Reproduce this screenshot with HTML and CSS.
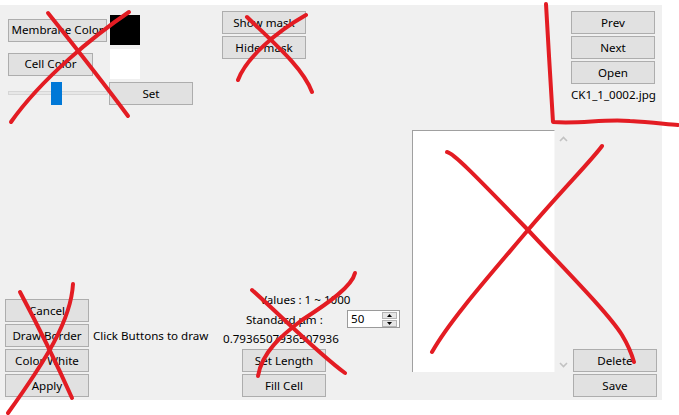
FILE: index.html
```html
<!DOCTYPE html>
<html>
<head>
<meta charset="utf-8">
<link rel="stylesheet" href="styles.css">
</head>
<body>
<div class="form">
  <div class="col col-left">
    <div class="color-group">
      <div class="color-row"><button class="btn w99">Membrane Color</button><span class="swatch black"></span></div>
      <div class="color-row"><button class="btn w85">Cell Color</button><span class="swatch white"></span></div>
      <div class="slider-row">
        <div class="slider"><span class="track"></span><span class="thumb"></span></div>
        <button class="btn w84">Set</button>
      </div>
    </div>
    <div class="btn-stack left-stack">
      <button class="btn w84">Cancel</button>
      <div class="draw-row"><button class="btn w84">Draw Border</button><span class="hint">Click Buttons to draw</span></div>
      <button class="btn w84">Color White</button>
      <button class="btn w84">Apply</button>
    </div>
  </div>

  <div class="col col-mid">
    <div class="btn-stack mask-stack">
      <button class="btn w84">Show mask</button>
      <button class="btn w84">Hide mask</button>
    </div>
    <div class="measure">
      <div class="values">Values : 1 ~ 1000</div>
      <div class="std-row">
        <span class="std-label">Standard μm :</span>
        <div class="updown">
          <span class="ud-value">50</span>
          <span class="ud-spin">
            <span class="ud-btn"><svg width="7" height="4" viewBox="0 0 7 4"><polygon points="3.5,0 7,4 0,4" fill="#000"/></svg></span>
            <span class="ud-btn"><svg width="7" height="4" viewBox="0 0 7 4"><polygon points="0,0 7,0 3.5,4" fill="#000"/></svg></span>
          </span>
        </div>
      </div>
      <div class="ratio">0.7936507936507936</div>
      <div class="btn-stack len-stack">
        <button class="btn w84">Set Length</button>
        <button class="btn w84">Fill Cell</button>
      </div>
    </div>
  </div>

  <div class="col col-panel">
    <div class="panel">
      <div class="canvas"></div>
      <div class="vscroll">
        <svg width="9" height="6" viewBox="0 0 9 6"><polyline points="1,5 4.5,1.5 8,5" fill="none" stroke="#c2c2c2" stroke-width="1.6"/></svg>
        <svg width="9" height="6" viewBox="0 0 9 6"><polyline points="1,1 4.5,4.5 8,1" fill="none" stroke="#c2c2c2" stroke-width="1.6"/></svg>
      </div>
    </div>
  </div>

  <div class="col col-right">
    <div class="btn-stack nav-stack">
      <button class="btn w84">Prev</button>
      <button class="btn w84">Next</button>
      <button class="btn w84">Open</button>
      <div class="filename">CK1_1_0002.jpg</div>
    </div>
    <div class="btn-stack file-stack">
      <button class="btn w84">Delete</button>
      <button class="btn w84">Save</button>
    </div>
  </div>
</div>

<svg class="marks" width="679" height="415" viewBox="0 0 679 415">
  <g fill="none" stroke="#e31c23" stroke-width="4" stroke-linecap="round" stroke-linejoin="round">
    <path d="M48,13 C68,38 100,78 128,116"/>
    <path d="M129,12 C95,35 42,78 11,122"/>
    <path d="M247,17 C275,44 303,68 312,92"/>
    <path d="M306,15 C276,32 246,58 238,80"/>
    <path d="M546,4 C548,40 551,90 553,122 C580,124 603,119 630,121 C650,122 665,124 678,125"/>
    <path d="M447,152 C453,153 470,170 528,230 C570,275 608,313 622,335 C628,345 632,355 634,362"/>
    <path d="M602,146 C592,160 562,190 528,230 C490,275 450,320 432,352"/>
    <path d="M20,292 C35,320 55,360 72,398"/>
    <path d="M73,284 C71,320 46,360 8,413"/>
    <path d="M252,290 C280,315 320,355 345,373"/>
    <path d="M355,273 C352,286 330,302 302,320 C282,335 262,352 258,376"/>
  </g>
</svg>
</body>
</html>
```

FILE: styles.css
```css
* { box-sizing: border-box; }

body {
  margin: 0;
  width: 679px;
  height: 415px;
  overflow: hidden;
  position: relative;
  background: #ffffff;
  font-family: "Noto Sans", "Open Sans", sans-serif;
  font-size: 11.6px;
  color: #000;
}

.form {
  margin-top: 5px;
  width: 662px;
  height: 395px;
  background: #f0f0f0;
  display: flex;
}

.col {
  display: flex;
  flex-direction: column;
  justify-content: space-between;
}

.col-left { width: 222px; }
.col-mid { width: 190px; }
.col-panel { width: 159px; justify-content: flex-start; }
.col-right { width: 91px; }

.btn {
  height: 23px;
  padding: 0;
  margin: 0;
  border: 1px solid #adadad;
  background: #e1e1e1;
  font: inherit;
  color: #000;
  line-height: 1;
  white-space: nowrap;
  display: flex;
  align-items: center;
  justify-content: center;
}

.w99 { width: 99px; }
.w85 { width: 85px; }
.w84 { width: 84px; }

.btn-stack {
  display: flex;
  flex-direction: column;
  gap: 2px;
}

/* left column */
.color-group {
  padding: 10px 0 0 8px;
  display: flex;
  flex-direction: column;
  gap: 4px;
}

.color-row {
  display: grid;
  grid-template-columns: 102px 30px;
  align-items: center;
}

.swatch {
  width: 30px;
  height: 30px;
  display: block;
}
.swatch.black { background: #000; }
.swatch.white { background: #fff; }

.slider-row {
  display: flex;
  margin-top: -1px;
}

.slider {
  width: 101px;
  height: 23px;
  position: relative;
}

.track {
  position: absolute;
  left: 0;
  right: 1px;
  top: 9px;
  height: 4px;
  background: #e7e7e7;
  border: 1px solid #d6d6d6;
}

.thumb {
  position: absolute;
  left: 43px;
  top: 0;
  width: 11px;
  height: 23px;
  background: #0078d7;
}

.left-stack {
  padding-left: 5px;
  padding-bottom: 3px;
}

.draw-row {
  display: flex;
  align-items: center;
  gap: 4px;
}

.hint { white-space: nowrap; }

/* middle column */
.mask-stack { padding-top: 6px; }

.measure {
  padding-bottom: 3px;
  display: flex;
  flex-direction: column;
}

.values {
  height: 16px;
  line-height: 16px;
  padding-left: 38px;
  white-space: nowrap;
}

.std-row {
  margin-top: 2px;
  height: 18px;
  display: grid;
  grid-template-columns: 125px 53px;
  align-items: center;
}

.std-label {
  padding-left: 24px;
  white-space: nowrap;
}

.updown {
  height: 18px;
  border: 1px solid #9a9a9a;
  background: #fff;
  display: flex;
  align-items: center;
  justify-content: space-between;
  padding-left: 3px;
  padding-right: 2px;
}

.ud-value { line-height: 16px; }

.ud-spin {
  display: flex;
  flex-direction: column;
  gap: 1px;
}

.ud-btn {
  width: 15px;
  height: 7px;
  background: #e6e6e6;
  border: 1px solid #b4b4b4;
  display: flex;
  align-items: center;
  justify-content: center;
}
.ud-btn svg { width: 5px; height: 3px; }

.ratio {
  margin-top: 3px;
  height: 16px;
  line-height: 16px;
  padding-left: 1px;
  white-space: nowrap;
}

.len-stack {
  margin-top: 2px;
  padding-left: 20px;
}

/* panel */
.panel {
  margin-top: 125px;
  height: 242px;
  display: flex;
}

.canvas {
  flex: 1;
  background: #fff;
  border-top: 1px solid #a0a0a0;
  border-left: 1px solid #a0a0a0;
  border-right: 1px solid #f7f7f7;
}

.vscroll {
  width: 16px;
  background: #f0f0f0;
  display: flex;
  flex-direction: column;
  justify-content: space-between;
  align-items: center;
  padding: 6px 0 4px;
}

/* right column */
.nav-stack { padding-top: 6px; }

.filename {
  width: 84px;
  margin-top: 1px;
  height: 16px;
  line-height: 16px;
  text-align: center;
  white-space: nowrap;
}

.file-stack {
  padding-left: 2px;
  padding-bottom: 3px;
}

.marks {
  position: absolute;
  left: 0;
  top: 0;
  pointer-events: none;
}
```
